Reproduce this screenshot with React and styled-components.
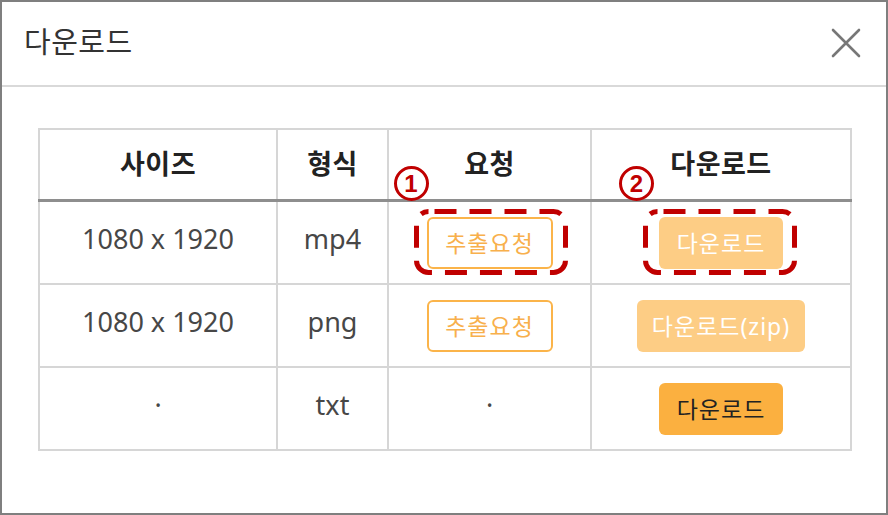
import React from "react";
import styled, { createGlobalStyle } from "styled-components";

const GlobalStyle = createGlobalStyle`
  body {
    margin: 0;
    background: #fff;
    font-family: "Noto Sans", "Noto Sans CJK KR", sans-serif;
  }
`;

// LAYOUT

const Dialog = styled.div`
  width: 888px;
  height: 515px;
  box-sizing: border-box;
  border: 2px solid #7f7f7f;
  background: #fff;
  display: flex;
  flex-direction: column;
`;

const Header = styled.header`
  flex-shrink: 0;
  height: 85px;
  display: flex;
  align-items: center;
  justify-content: space-between;
  padding: 0 25px 8px 22px;
  box-sizing: border-box;
  border-bottom: 2px solid #d9d9d9;
`;

const Title = styled.h1`
  margin: 0;
  font-family: "Noto Sans CJK KR", sans-serif;
  font-size: 29px;
  font-weight: 400;
  color: #333;
  letter-spacing: 0.5px;
`;

const CloseButton = styled.button`
  border: 0;
  background: none;
  padding: 0;
  width: 30px;
  height: 30px;
  margin-top: 6px;
  cursor: pointer;
  svg {
    display: block;
  }
`;

const Body = styled.div`
  padding: 41px 36px;
`;

const Table = styled.table`
  width: 812px;
  border-collapse: collapse;
  table-layout: fixed;
  border: 2px solid #d6d6d6;
  color: #444;
`;

const Th = styled.th`
  position: relative;
  height: 65px;
  border: 2px solid #d6d6d6;
  border-bottom: 3px solid #8e8e8e;
  font-family: "Noto Sans CJK KR", sans-serif;
  font-size: 27px;
  font-weight: 700;
  color: #222;
  padding: 0 0 4px;
  letter-spacing: 0.5px;
`;

const Td = styled.td`
  height: ${p => (p.$text ? 73 : 81)}px;
  border: 2px solid #d6d6d6;
  text-align: center;
  vertical-align: middle;
  font-size: 27px;
  color: #474747;
  padding: ${p => (p.$text ? "0 0 8px" : "0")};
`;

// BUTTONS

const OutlineButton = styled.button`
  width: 126px;
  height: 52px;
  border: 2px solid #fbb44a;
  border-radius: 6px;
  background: #fff;
  color: #f8b04c;
  font-family: "Noto Sans CJK KR", sans-serif;
  font-size: 23px;
  letter-spacing: 1px;
  padding: 0 0 2px;
  cursor: pointer;
`;

const FillButton = styled.button`
  width: ${p => p.$w}px;
  height: 52px;
  border: 0;
  border-radius: 6px;
  background: ${p => (p.$disabled ? "#fdcd85" : "#fbb040")};
  color: ${p => (p.$disabled ? "#fff" : "#222")};
  font-family: "Noto Sans", "Noto Sans CJK KR", sans-serif;
  font-size: 23px;
  letter-spacing: 1px;
  padding: 0 0 2px;
  cursor: ${p => (p.$disabled ? "default" : "pointer")};
`;

// ANNOTATIONS

const Marked = styled.span`
  position: relative;
  display: inline-block;
  vertical-align: middle;
`;

const DashBox = styled.svg`
  position: absolute;
  left: ${p => p.$dx}px;
  top: -8px;
  pointer-events: none;
`;

const Badge = styled.span`
  position: absolute;
  left: ${p => p.$dx}px;
  top: -51px;
  width: 35px;
  height: 35px;
  box-sizing: border-box;
  border: 3px solid #c00000;
  border-radius: 50%;
  color: #c00000;
  font-family: "Liberation Sans", sans-serif;
  font-weight: 700;
  font-size: 24px;
  line-height: 29px;
  text-align: center;
`;

function Annotated({ n, dx, bx, children }) {
  return (
    <Marked>
      {children}
      <Badge $dx={bx}>{n}</Badge>
      <DashBox $dx={dx} width="154" height="67">
        <rect
          x="2.5"
          y="2.5"
          width="149"
          height="61"
          rx="12"
          fill="none"
          stroke="#c00000"
          strokeWidth="5"
          strokeDasharray="22 13"
          strokeDashoffset="-6"
        />
      </DashBox>
    </Marked>
  );
}

const rows = [
  { size: "1080 x 1920", type: "mp4" },
  { size: "1080 x 1920", type: "png" },
  { size: "·", type: "txt" }
];

export default function App() {
  return (
    <>
      <GlobalStyle />
      <Dialog>
        <Header>
          <Title>다운로드</Title>
          <CloseButton aria-label="close">
            <svg width="30" height="30" viewBox="0 0 30 30">
              <path
                d="M2 2 L28 28 M28 2 L2 28"
                stroke="#777"
                strokeWidth="2.6"
                strokeLinecap="round"
              />
            </svg>
          </CloseButton>
        </Header>
        <Body>
          <Table>
            <colgroup>
              <col style={{ width: 238 }} />
              <col style={{ width: 111 }} />
              <col style={{ width: 203 }} />
              <col style={{ width: 260 }} />
            </colgroup>
            <thead>
              <tr>
                <Th>사이즈</Th>
                <Th>형식</Th>
                <Th>요청</Th>
                <Th>다운로드</Th>
              </tr>
            </thead>
            <tbody>
              <tr>
                <Td $text>{rows[0].size}</Td>
                <Td $text>{rows[0].type}</Td>
                <Td>
                  <Annotated n="1" dx={-13} bx={-33}>
                    <OutlineButton>추출요청</OutlineButton>
                  </Annotated>
                </Td>
                <Td>
                  <Annotated n="2" dx={-16} bx={-40}>
                    <FillButton $w={124} $disabled>
                      다운로드
                    </FillButton>
                  </Annotated>
                </Td>
              </tr>
              <tr>
                <Td $text>{rows[1].size}</Td>
                <Td $text>{rows[1].type}</Td>
                <Td>
                  <OutlineButton>추출요청</OutlineButton>
                </Td>
                <Td>
                  <FillButton $w={168} $disabled>
                    다운로드(zip)
                  </FillButton>
                </Td>
              </tr>
              <tr>
                <Td $text>{rows[2].size}</Td>
                <Td $text>{rows[2].type}</Td>
                <Td $text>·</Td>
                <Td>
                  <FillButton $w={124}>다운로드</FillButton>
                </Td>
              </tr>
            </tbody>
          </Table>
        </Body>
      </Dialog>
    </>
  );
}
